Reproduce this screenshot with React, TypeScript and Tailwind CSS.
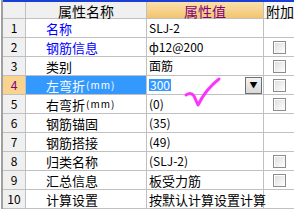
import React from "react";

interface Row {
  no: number;
  name: string;
  unit?: string;
  value: string;
  blue?: boolean;
  check?: boolean;
}

const rows: Row[] = [
  { no: 1, name: "名称", value: "SLJ-2", blue: true },
  { no: 2, name: "钢筋信息", value: "ф12@200", blue: true, check: true },
  { no: 3, name: "类别", value: "面筋", check: true },
  { no: 4, name: "左弯折", unit: "(mm)", value: "300", check: true },
  { no: 5, name: "右弯折", unit: "(mm)", value: "(0)", check: true },
  { no: 6, name: "钢筋锚固", value: "(35)" },
  { no: 7, name: "钢筋搭接", value: "(49)" },
  { no: 8, name: "归类名称", value: "(SLJ-2)", check: true },
  { no: 9, name: "汇总信息", value: "板受力筋", check: true },
  { no: 10, name: "计算设置", value: "按默认计算设置计算" },
];

const Check = () => (
  <span className="block h-[13px] w-[13px] border border-[#8c8c8c] bg-gradient-to-br from-[#dcdcdc] to-[#ffffff] shadow-[inset_1px_1px_0_#ffffff]" />
);

export default function App() {
  return (
    <div
      className="relative flex h-[209px] w-[294px] overflow-hidden bg-white text-[13px] leading-none text-black"
      style={{ fontFamily: '"Noto Sans CJK SC", "Liberation Sans", sans-serif' }}
    >
      <div className="w-[9px] bg-white" />
      <div className="w-[7px] border-l border-[#a0a0a0] bg-[#ececec]" />
      <div className="flex flex-1 flex-col border-l border-[#a0a0a0]">
        <div className="h-[5px] bg-[#1a3fd8]" />
        <div className="flex h-[23px] border-b border-[#c0c0c0]">
          <div className="w-[23px] border-r border-[#c0c0c0] bg-[#f0f0f0]" />
          <div className="flex w-[121px] items-center justify-center border-r border-[#c0c0c0] bg-[#f0f0f0] pt-[2px] text-[14px]">
            属性名称
          </div>
          <div className="flex w-[117px] items-center justify-center border-r border-[#c0c0c0] bg-gradient-to-b from-[#fbe0aa] to-[#f2c56e] pt-[2px] text-[14px] text-[#800080]">
            属性值
          </div>
          <div className="flex flex-1 items-center whitespace-nowrap bg-[#f7f7f7] pl-[2px] pt-[2px] text-[14px]">附加</div>
        </div>
        {rows.map((r) => {
          const sel = r.no === 4;
          return (
            <div key={r.no} className="flex h-[19px] shrink-0 border-b border-[#c0c0c0]">
              <div
                className={`flex w-[23px] items-center justify-center border-r border-[#c0c0c0] text-[12px] ${
                  sel ? "bg-[#f8d48f] text-[#800080]" : "bg-[#f0f0f0]"
                }`}
              >
                {r.no}
              </div>
              <div
                className={`flex w-[121px] items-center whitespace-nowrap border-r border-[#c0c0c0] pl-[20px] ${
                  sel ? "bg-[#3399ff] text-white" : r.blue ? "text-[#0000ff]" : ""
                }`}
              >
                {r.name}
                {r.unit && <span className="pl-[1px] text-[10px] tracking-[1px]">{r.unit}</span>}
              </div>
              <div className="flex w-[117px] items-center whitespace-nowrap border-r border-[#c0c0c0] pl-[2px] text-[12px]">
                {sel ? (
                  <div className="flex h-full flex-1 items-center justify-between pr-[1px]">
                    <span className="bg-[#3399ff] px-[1px] text-white">300</span>
                    <span className="flex h-[17px] w-[17px] items-center justify-center border border-[#707070] bg-gradient-to-b from-[#f4f4f4] to-[#d8d8d8] text-[8px]">
                      ▼
                    </span>
                  </div>
                ) : (
                  <span className={r.no === 9 || r.no === 10 ? "text-[13px]" : ""}>{r.value}</span>
                )}
              </div>
              <div className="flex flex-1 items-center pl-[9px]">{r.check && <Check />}</div>
            </div>
          );
        })}
      </div>
      <svg className="absolute left-[183px] top-[76px]" width="40" height="32" viewBox="0 0 40 32">
        <path
          d="M3 19 C6 17 9 17 11 20 L15 29 C20 19 27 10 36 3"
          fill="none"
          stroke="#ff33ff"
          strokeWidth="3"
          strokeLinecap="round"
          strokeLinejoin="round"
        />
      </svg>
    </div>
  );
}
